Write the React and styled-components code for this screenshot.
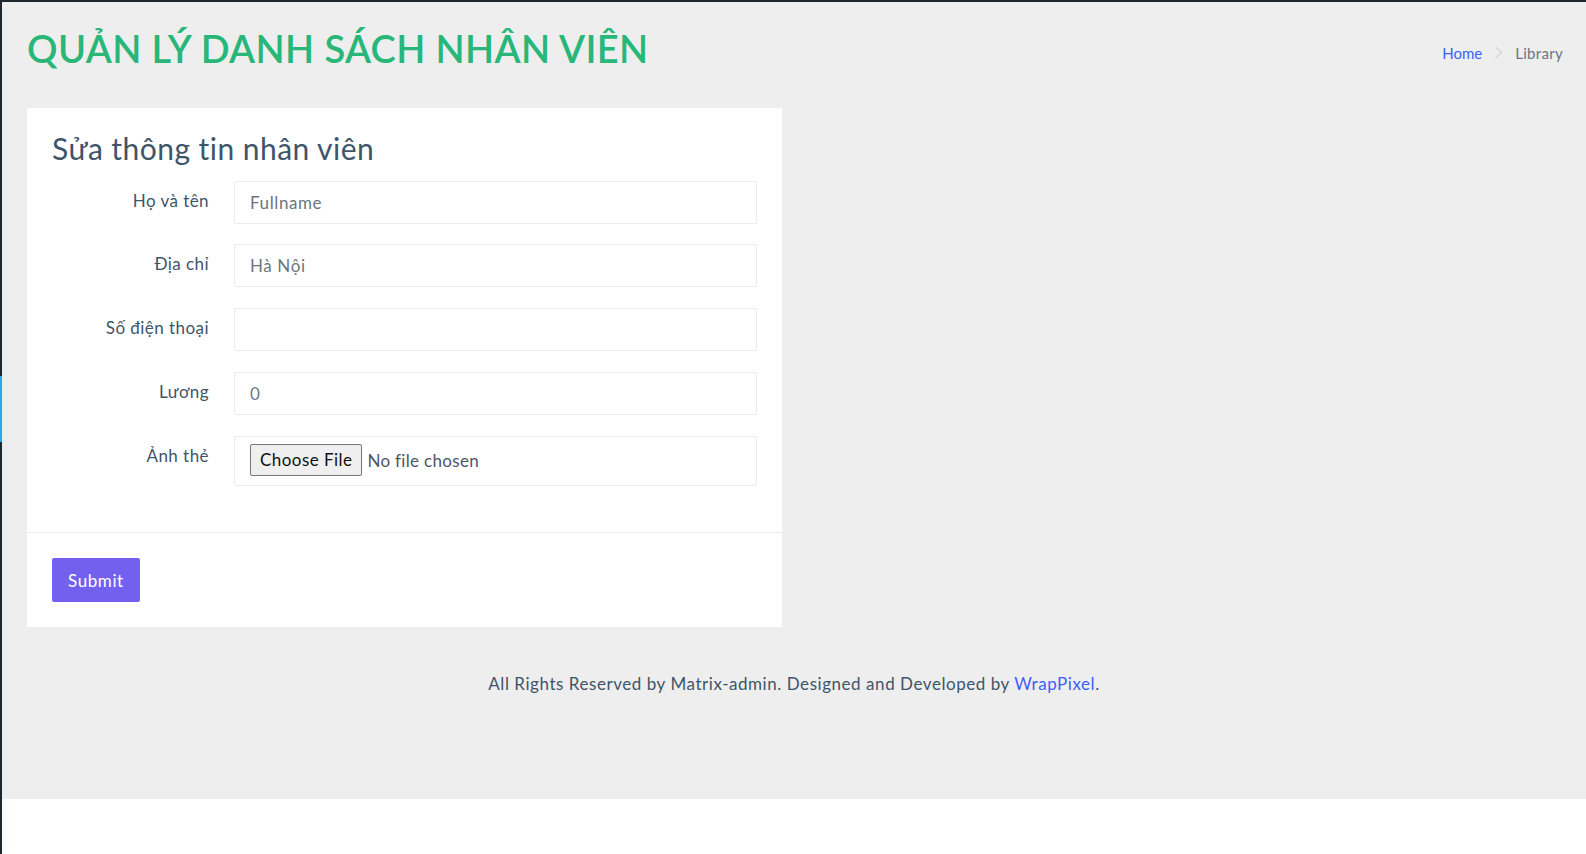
import React from 'react';
import styled, { createGlobalStyle } from 'styled-components';

const GlobalStyle = createGlobalStyle`
  html, body {
    margin: 0;
    padding: 0;
    background: #ffffff;
    font-family: 'Lato', 'Noto Sans', sans-serif;
    color: #3e5569;
  }
  * {
    box-sizing: border-box;
  }
`;

const Shell = styled.div`
  display: flex;
  flex-direction: column;
  height: 854px;
  overflow: hidden;
`;

const Topbar = styled.div`
  height: 2px;
  background: #1f262d;
  flex-shrink: 0;
`;

const Body = styled.div`
  display: flex;
  flex: 1;
`;

const Sidebar = styled.aside`
  width: 2px;
  background: #1f262d;
  display: flex;
  flex-direction: column;
  box-shadow: 1px 0 20px rgba(0, 0, 0, 0.08);
  z-index: 1;
`;

const SidebarItem = styled.div`
  margin-top: ${(p) => p.$offset}px;
  height: ${(p) => p.$size}px;
  background: ${(p) => (p.$active ? '#27a9e3' : 'transparent')};
`;

const Main = styled.main`
  flex: 1;
  display: flex;
  flex-direction: column;
`;

const PageWrapper = styled.div`
  height: 797px;
  background: #eeeeee;
  padding: 0 25px;
  display: flex;
  flex-direction: column;
`;

const PageHeader = styled.div`
  display: flex;
  align-items: center;
  justify-content: space-between;
  padding-top: 24px;
  margin-bottom: 36px;
`;

const PageTitle = styled.h1`
  margin: 0;
  font-size: 38px;
  line-height: 1.2;
  font-weight: 600;
  letter-spacing: 0.35px;
  color: #28b779;
`;

const Breadcrumb = styled.nav`
  display: flex;
  align-items: center;
  gap: 12px;
  font-size: 15px;
  margin-top: 8px;
  margin-right: -2px;
`;

const Crumb = styled.a`
  color: ${(p) => (p.$active ? '#6c757d' : '#3f5efb')};
  letter-spacing: ${(p) => (p.$active ? '0.3px' : '0')};
  text-decoration: none;
`;

const Card = styled.section`
  width: 755px;
  background: #ffffff;
`;

const CardBody = styled.div`
  padding: 25px 25px ${(p) => (p.$divided ? 25 : 26)}px;
  border-top: ${(p) => (p.$divided ? '1px solid #e9ecef' : 'none')};
`;

const CardTitle = styled.h3`
  margin: 0 0 18px;
  font-size: 30px;
  line-height: 1;
  font-weight: 400;
  letter-spacing: 0.45px;
  color: #3e5569;
`;

const FormRow = styled.div`
  display: grid;
  grid-template-columns: 157px 1fr;
  column-gap: 25px;
  margin-bottom: 20.75px;
`;

const Label = styled.label`
  text-align: right;
  padding-top: 8px;
  font-size: 17px;
  line-height: 24px;
  letter-spacing: 0.45px;
  color: #3e5569;
`;

const Input = styled.input`
  width: 100%;
  height: 43px;
  padding: 0 15px;
  border: 1px solid #e9ecef;
  border-radius: 2px;
  font-family: inherit;
  font-size: 17px;
  letter-spacing: 0.6px;
  color: #6a7a8c;
  background: #ffffff;
  outline: none;

  &::placeholder {
    color: #6c757d;
  }
`;

const FileInput = styled(Input).attrs({ type: 'file' })`
  height: 50px;
  padding: 7px 15px;
  letter-spacing: 0.32px;
  color: #4f5467;

  &::file-selector-button {
    font-family: inherit;
    font-size: 17px;
    letter-spacing: 0.45px;
    height: 32px;
    padding: 0 9px;
    margin-right: 5px;
    color: #111111;
    background: #efefef;
    border: 1px solid #767676;
    border-radius: 2px;
  }
`;

const SubmitButton = styled.button`
  height: 44px;
  padding: 0 16px;
  border: none;
  border-radius: 2px;
  background: #7460ee;
  color: #ffffff;
  font-family: inherit;
  font-size: 17px;
  letter-spacing: 0.6px;
  cursor: pointer;
`;

const Footer = styled.footer`
  padding-top: 45px;
  text-align: center;
  font-size: 17px;
  line-height: 24px;
  letter-spacing: 0.55px;
  color: #3e5569;
`;

const FooterLink = styled.a`
  color: #3f5efb;
  text-decoration: none;
`;

const fields = [
  { label: 'Họ và tên', placeholder: 'Fullname' },
  { label: 'Địa chỉ', placeholder: 'Hà Nội' },
  { label: 'Số điện thoại', placeholder: '' },
  { label: 'Lương', value: '0' },
];

const App = () => {
  return (
    <Shell>
      <GlobalStyle />
      <Topbar />
      <Body>
        <Sidebar>
          <SidebarItem $offset={374} $size={66} $active />
        </Sidebar>
        <Main>
          <PageWrapper>
            <PageHeader>
              <PageTitle>QUẢN LÝ DANH SÁCH NHÂN VIÊN</PageTitle>
              <Breadcrumb>
                <Crumb href="#">Home</Crumb>
                <svg width="9" height="13" viewBox="0 0 9 13">
                  <polyline
                    points="1.5,1 7.5,6.5 1.5,12"
                    fill="none"
                    stroke="#cfd4da"
                    strokeWidth="1.3"
                  />
                </svg>
                <Crumb $active>Library</Crumb>
              </Breadcrumb>
            </PageHeader>

            <Card>
              <CardBody>
                <CardTitle>Sửa thông tin nhân viên</CardTitle>
                {fields.map((f) => (
                  <FormRow key={f.label}>
                    <Label>{f.label}</Label>
                    <Input
                      placeholder={f.placeholder}
                      defaultValue={f.value}
                    />
                  </FormRow>
                ))}
                <FormRow>
                  <Label>Ảnh thẻ</Label>
                  <FileInput />
                </FormRow>
              </CardBody>
              <CardBody $divided>
                <SubmitButton>Submit</SubmitButton>
              </CardBody>
            </Card>

            <Footer>
              All Rights Reserved by Matrix-admin. Designed and Developed by{' '}
              <FooterLink href="#">WrapPixel</FooterLink>.
            </Footer>
          </PageWrapper>
        </Main>
      </Body>
    </Shell>
  );
};

export default App;
